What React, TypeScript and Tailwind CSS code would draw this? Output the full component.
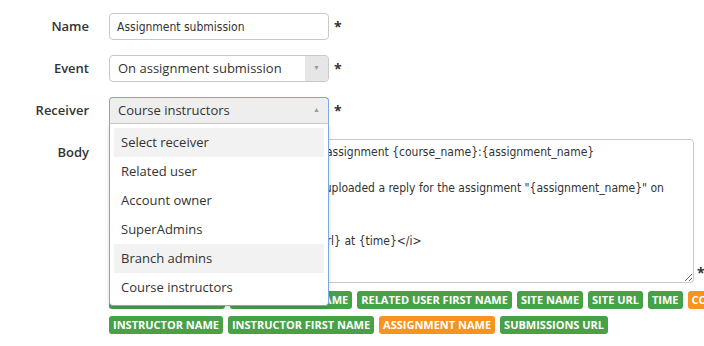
import React from 'react';

type Tag = { label: string; orange?: boolean };

const tags: Tag[] = [
    { label: 'RELATED USER TYPE' },
    { label: 'RELATED USER NAME' },
    { label: 'RELATED USER FIRST NAME' },
    { label: 'SITE NAME' },
    { label: 'SITE URL' },
    { label: 'TIME' },
    { label: 'COURSE NAME', orange: true },
    { label: 'INSTRUCTOR NAME' },
    { label: 'INSTRUCTOR FIRST NAME' },
    { label: 'ASSIGNMENT NAME', orange: true },
    { label: 'SUBMISSIONS URL' },
];

const receivers = [
    'Select receiver',
    'Related user',
    'Account owner',
    'SuperAdmins',
    'Branch admins',
    'Course instructors',
];

const bodyText = [
    'Notification: A new submission for the assignment {course_name}:{assignment_name}',
    '',
    'Dear all the learner {user_name} has uploaded a reply for the assignment "{assignment_name}" on',
    '{submission_date}.',
    '',
    '<i>Sent by {site_name} using {site_url} at {time}</i>',
].join('\n');

const Label = ({ children }: { children: React.ReactNode }) => (
    <div className="w-[89px] h-[27px] shrink-0 flex items-center justify-end text-[13px] font-semibold text-[#333]">
        {children}
    </div>
);

const Star = () => <span className="ml-[5px] text-[14px] leading-[27px] font-bold text-[#333]">*</span>;

const App = () => {
    const highlighted = ['Select receiver', 'Branch admins'];

    return (
        <div className="relative w-[704px] h-[346px] overflow-hidden bg-white font-['Open_Sans',sans-serif]">
            <div className="flex flex-col gap-[15px] pt-[13px]">
                <div className="flex items-start gap-[20px]">
                    <Label>Name</Label>
                    <div className="flex items-start">
                        <input
                            readOnly
                            value="Assignment submission"
                            className="w-[220px] h-[27px] px-[7px] border border-[#c8c8c8] rounded-[4px] text-[12px] text-[#333] font-['DejaVu_Sans_Condensed','DejaVu_Sans',sans-serif] outline-none"
                        />
                        <Star />
                    </div>
                </div>

                <div className="flex items-start gap-[20px]">
                    <Label>Event</Label>
                    <div className="flex items-start">
                        <div className="w-[220px] h-[27px] flex border border-[#c8c8c8] rounded-[4px] overflow-hidden">
                            <div className="flex-1 flex items-center pl-[8px] text-[13px] text-[#333]">On assignment submission</div>
                            <div className="w-[23px] flex items-center justify-center bg-[#e6e6e6]">
                                <span className="text-[7px] text-[#9a9a9a]">▼</span>
                            </div>
                        </div>
                        <Star />
                    </div>
                </div>

                <div className="flex items-start gap-[20px]">
                    <Label>Receiver</Label>
                    <div className="flex items-start">
                        <div className="w-[220px] h-[27px] flex items-center border border-[#7aa6e3] border-b-[#d0d0d0] rounded-t-[4px] bg-[#eeeeee]">
                            <div className="flex-1 pl-[8px] text-[13px] text-[#333]">Course instructors</div>
                            <div className="w-[23px] flex items-center justify-center">
                                <span className="text-[7px] text-[#9a9a9a]">▲</span>
                            </div>
                        </div>
                        <Star />
                    </div>
                </div>

                <div className="flex items-start gap-[20px]">
                    <Label>Body</Label>
                    <div className="shrink-0 flex flex-col gap-[8px]">
                        <div className="flex items-end">
                            <textarea
                                readOnly
                                value={bodyText}
                                className="w-[585px] h-[144px] px-[7px] pt-[4px] border border-[#c8c8c8] rounded-[4px] text-[12px] leading-[17.8px] text-[#333] font-['DejaVu_Sans_Condensed','DejaVu_Sans',sans-serif] outline-none resize-both"
                            />
                            <span className="ml-[3px] text-[14px] leading-[20px] font-bold text-[#333]">*</span>
                        </div>
                        <div className="w-[700px] flex flex-wrap gap-x-[5px] gap-y-[7px]">
                            {tags.map(tag => (
                                <span
                                    key={tag.label}
                                    className={`h-[18px] px-[4px] flex items-center rounded-[3px] text-[11px] font-bold text-white whitespace-nowrap ${tag.orange ? 'bg-[#f7931e]' : 'bg-[#47a247]'}`}
                                >
                                    {tag.label}
                                </span>
                            ))}
                        </div>
                    </div>
                </div>
            </div>

            <div className="absolute left-[109px] top-[124px] w-[220px] px-[4px] pt-[4px] pb-[3px] bg-white border border-t-0 border-[#7aa6e3] rounded-b-[4px] shadow-[0_2px_4px_rgba(0,0,0,0.15)]">
                {receivers.map(r => (
                    <div
                        key={r}
                        className={`h-[29px] flex items-center pl-[7px] text-[13px] text-[#333] ${highlighted.includes(r) ? 'bg-[#f2f2f2]' : ''}`}
                    >
                        {r}
                    </div>
                ))}
            </div>
        </div>
    );
};

export default App;
